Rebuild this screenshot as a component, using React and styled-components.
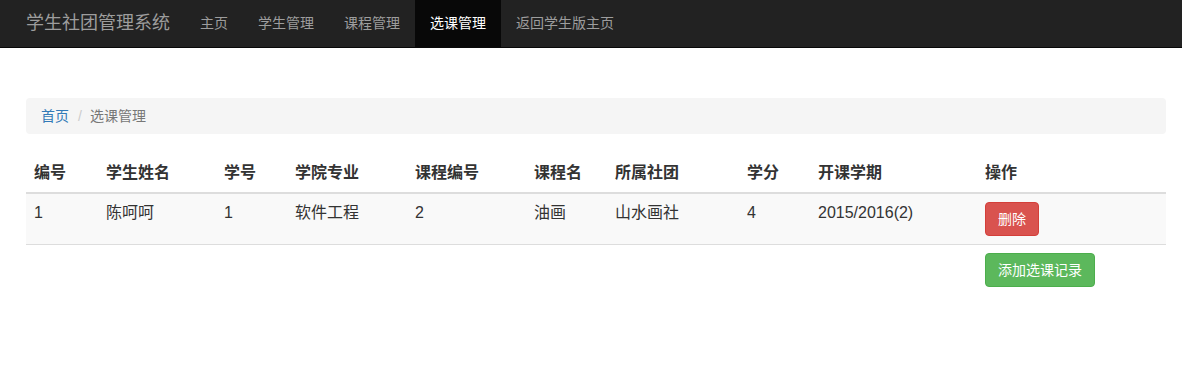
import React from "react";
import styled, { createGlobalStyle } from "styled-components";

const Global = createGlobalStyle`
  html, body { margin: 0; padding: 0; background: #fff; }
  body {
    font-family: "Liberation Sans", "Noto Sans CJK SC", sans-serif;
    font-size: 14px;
    line-height: 1.42857;
    color: #333;
  }
  * { box-sizing: border-box; }
`;

const Navbar = styled.nav`
  display: flex;
  align-items: stretch;
  height: 48px;
  background: #222;
  border-bottom: 1px solid #080808;
  padding-left: 11px;
`;

const Brand = styled.a`
  display: flex;
  align-items: center;
  padding: 0 15px;
  font-size: 18px;
  color: #9d9d9d;
  text-decoration: none;
`;

const NavList = styled.ul`
  display: flex;
  list-style: none;
  margin: 0;
  padding: 0;
`;

const NavLink = styled.a`
  display: flex;
  align-items: center;
  height: 100%;
  padding: 0 15px;
  color: ${(p) => (p.$active ? "#fff" : "#9d9d9d")};
  background: ${(p) => (p.$active ? "#080808" : "transparent")};
  text-decoration: none;
`;

const Container = styled.main`
  padding: 50px 16px 0 26px;
`;

const Breadcrumb = styled.ol`
  display: flex;
  list-style: none;
  margin: 0 0 20px;
  padding: 8px 15px;
  background: #f5f5f5;
  border-radius: 4px;
  line-height: 20px;
`;

const Crumb = styled.li`
  color: ${(p) => (p.$active ? "#777" : "#337ab7")};
  &:not(:first-child)::before {
    content: "/";
    padding: 0 8px 0 9px;
    color: #ccc;
  }
`;

const Table = styled.table`
  width: 1140px;
  border-collapse: collapse;
  border-spacing: 0;
  table-layout: fixed;
  font-size: 16px;
`;

const Th = styled.th`
  text-align: left;
  font-weight: bold;
  padding: 8px;
  line-height: 22px;
  border-bottom: 2px solid #ddd;
  color: #333;
`;

const Row = styled.tr`
  background: ${(p) => (p.$striped ? "#f9f9f9" : "transparent")};
`;

const Td = styled.td`
  padding: 8px;
  line-height: 22px;
  vertical-align: top;
  border-top: 1px solid #ddd;
  color: #333;
`;

const Button = styled.button`
  display: inline-block;
  height: 34px;
  padding: 6px 12px;
  font-family: inherit;
  font-size: 14px;
  line-height: 20px;
  border-radius: 4px;
  border: 1px solid ${(p) => (p.$variant === "danger" ? "#d43f3a" : "#4cae4c")};
  background: ${(p) => (p.$variant === "danger" ? "#d9534f" : "#5cb85c")};
  color: #fff;
  cursor: pointer;
`;

const cols = [
  ["编号", 72],
  ["学生姓名", 118],
  ["学号", 71],
  ["学院专业", 120],
  ["课程编号", 119],
  ["课程名", 81],
  ["所属社团", 132],
  ["学分", 71],
  ["开课学期", 167],
  ["操作", 189],
];

const rows = [["1", "陈呵呵", "1", "软件工程", "2", "油画", "山水画社", "4", "2015/2016(2)"]];

export default function App() {
  return (
    <>
      <Global />
      <Navbar>
        <Brand href="#">学生社团管理系统</Brand>
        <NavList>
          {["主页", "学生管理", "课程管理", "选课管理", "返回学生版主页"].map((t) => (
            <li key={t}>
              <NavLink href="#" $active={t === "选课管理"}>{t}</NavLink>
            </li>
          ))}
        </NavList>
      </Navbar>
      <Container>
        <Breadcrumb>
          <Crumb>首页</Crumb>
          <Crumb $active>选课管理</Crumb>
        </Breadcrumb>
        <Table>
          <colgroup>
            {cols.map(([t, w]) => (
              <col key={t} style={{ width: w }} />
            ))}
          </colgroup>
          <thead>
            <tr>
              {cols.map(([t]) => (
                <Th key={t}>{t}</Th>
              ))}
            </tr>
          </thead>
          <tbody>
            {rows.map((r, i) => (
              <Row key={i} $striped>
                {r.map((c, j) => (
                  <Td key={j}>{c}</Td>
                ))}
                <Td>
                  <Button $variant="danger">删除</Button>
                </Td>
              </Row>
            ))}
            <Row>
              <Td colSpan={9} />
              <Td>
                <Button $variant="success">添加选课记录</Button>
              </Td>
            </Row>
          </tbody>
        </Table>
      </Container>
    </>
  );
}
